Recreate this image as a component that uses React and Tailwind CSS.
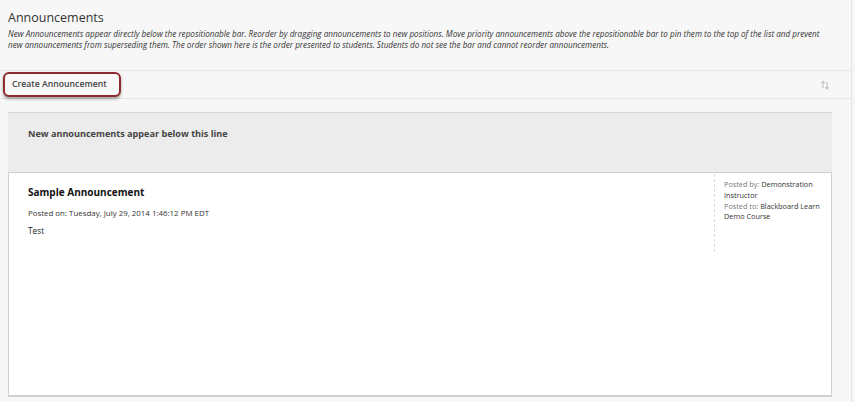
import React from "react";

const SortIcon = () => (
  <svg width="10" height="10" viewBox="0 0 10 10" fill="none" stroke="#c4c4c4" strokeWidth="1.2">
    <path d="M3 8V1.5M1.3 3.2L3 1.3l1.7 1.9" />
    <path d="M7 2v7M5.3 7.2L7 9.1l1.7-1.9" />
  </svg>
);

export default function App() {
  return (
    <div className="w-[855px] h-[402px] overflow-hidden bg-[#f7f7f7] font-['Open_Sans',sans-serif] text-[#333]">
      <div className="w-[852px] h-full border-r border-[#e4e4e4]">
        {/* Page header */}
        <div className="h-[70px] px-2 pt-[8px]">
          <h1 className="text-[12.5px] leading-[20px] text-[#333]">Announcements</h1>
          <p className="text-[8.15px] leading-[11px] italic text-[#333] pr-[12px]">
            New Announcements appear directly below the repositionable bar. Reorder by dragging announcements to new positions. Move priority announcements above the repositionable bar to pin them to the top of the list and prevent new announcements from superseding them. The order shown here is the order presented to students. Students do not see the bar and cannot reorder announcements.
          </p>
        </div>

        {/* Toolbar */}
        <div className="h-[29px] border-y border-[#e6e6e6] flex items-center justify-between pl-[3px] pr-[21px]">
          <button className="h-[25px] w-[118px] rounded-[6px] border-2 border-[#8d2b30] bg-[#f8f8f8] text-left pl-[7px] whitespace-nowrap text-[8.7px] font-semibold text-[#444] shadow-[0_2px_3px_rgba(0,0,0,0.35)]">
            Create Announcement
          </button>
          <SortIcon />
        </div>

        {/* List */}
        <div className="pl-2 pr-[19px] pt-[13px]">
          <div className="h-[60px] bg-[#ececec] border-t border-[#d6d6d6] pl-[20px] pt-[14px]">
            <div className="text-[9.1px] leading-[14px] font-bold text-[#444]">New announcements appear below this line</div>
          </div>
          <div className="h-[225px] bg-white border border-[#d0d0d0] border-b-2 border-b-[#cfcfcf] flex">
            <div className="flex-1 pl-[19px] pt-[11px]">
              <div className="text-[10px] leading-[16px] font-bold text-[#111]">Sample Announcement</div>
              <div className="mt-[7px] text-[7.9px] leading-[12px] text-[#333]">Posted on: Tuesday, July 29, 2014 1:46:12 PM EDT</div>
              <div className="mt-[6px] text-[8.3px] leading-[12px] text-[#222]">Test</div>
            </div>
            <div className="w-[117px] h-[78px] mt-[1px] border-l border-dashed border-[#dcdcdc] pl-[9px] pr-[9px] pt-[5px] text-[7.3px] leading-[10.8px]">
              <div>
                <span className="text-[#777]">Posted by: </span>
                <span className="text-[#333]">Demonstration Instructor</span>
              </div>
              <div>
                <span className="text-[#777]">Posted to: </span>
                <span className="text-[#333]">Blackboard Learn Demo Course</span>
              </div>
            </div>
          </div>
        </div>
      </div>
    </div>
  );
}
